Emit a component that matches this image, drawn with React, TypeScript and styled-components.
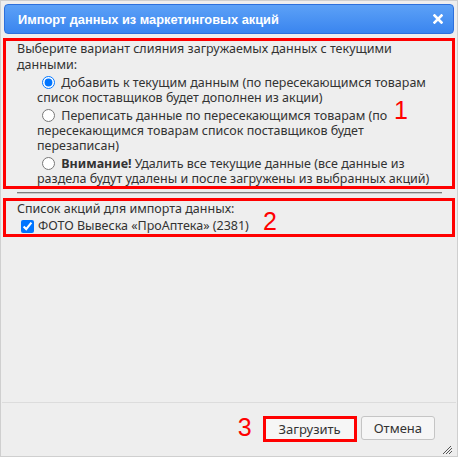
import * as React from 'react'
import styled, { createGlobalStyle } from 'styled-components';

const GlobalStyle = createGlobalStyle`
    html, body { margin: 0; padding: 0; background: #ffffff; }
    body { font-family: "Noto Sans", "Open Sans", sans-serif; }
    * { box-sizing: border-box; }
`

const Dialog = styled.div`
    width: 458px;
    height: 457px;
    display: flex;
    flex-direction: column;
    background: #eeeeee;
    border: 1px solid #cfcfcf;
    padding: 3px 2px 0 2px;
    position: relative;
    color: #333333;
    font-size: 12.5px;
`
const TitleBar = styled.div`
    height: 30px;
    margin: 0 1px;
    display: flex;
    align-items: center;
    justify-content: space-between;
    padding: 0 10px 0 13px;
    border: 1px solid #2d70dc;
    border-radius: 4px;
    background: linear-gradient(to bottom, #5ca1f7, #3a85ef);
    color: #ffffff;
    font-family: "Liberation Sans", sans-serif;
    font-weight: bold;
    font-size: 12.8px;
`
const CloseButton = styled.span`
    display: flex;
    width: 10px;
    height: 10px;
`
const Body = styled.div`
    flex: 1;
    padding-top: 4px;
`
const Marked = styled.div<{ $pad: string }>`
    position: relative;
    border: 3px solid #ff0000;
    padding: ${p => p.$pad};
    line-height: 15px;
`
const Lead = styled.div`
    line-height: 15.5px;
`
const Option = styled.div`
    padding-left: 20px;
    margin-top: 1px;
    input { margin: 3px 3px 0 5px; vertical-align: -2px; }
`
const Note = styled.span<{ $x: number, $y: number }>`
    position: absolute;
    left: ${p => p.$x}px;
    top: ${p => p.$y}px;
    color: #ff0000;
    font-family: "Liberation Sans", sans-serif;
    font-size: 25px;
    line-height: 25px;
`
const Separator = styled.hr`
    margin: 3px 13px 4px 14px;
    border: 0;
    border-top: 1px solid #7d7d7d;
    border-bottom: 1px solid #c8c8c8;
`
const CheckRow = styled.label`
    display: flex;
    align-items: center;
    margin-top: 2px;
    input { margin: 1px 4px 0 4px; width: 13px; height: 13px; }
`
const ButtonPane = styled.div`
    display: flex;
    justify-content: flex-end;
    align-items: center;
    gap: 4px;
    margin: 0 -1px;
    padding: 10px 21px 14px 0;
    border-top: 1px solid #dcdcdc;
`
const Button = styled.button<{ $marked?: boolean }>`
    height: ${p => p.$marked ? 26 : 24}px;
    padding: 0 ${p => p.$marked ? 13 : 12}px;
    margin-top: ${p => p.$marked ? 2 : 0}px;
    background: #f6f6f6;
    border: ${p => p.$marked ? '3px solid #ff0000' : '1px solid #c5c5c5'};
    border-radius: ${p => p.$marked ? 0 : 3}px;
    color: #333333;
    font-family: "Noto Sans", sans-serif;
    font-size: 13px;
`
const Three = styled.span`
    color: #ff0000;
    font-family: "Liberation Sans", sans-serif;
    font-size: 25px;
    margin-right: 7px;
`
const Grip = styled.svg`
    position: absolute;
    right: 4px;
    bottom: 1px;
`

export default function App() {
    return (
        <Dialog>
            <GlobalStyle />
            <TitleBar>
                <span>Импорт данных из маркетинговых акций</span>
                <CloseButton>
                    <svg width="10" height="10" viewBox="0 0 10 10">
                        <path d="M1.5 1.5 L8.5 8.5 M8.5 1.5 L1.5 8.5" stroke="#fff" strokeWidth="2.6" strokeLinecap="square" />
                    </svg>
                </CloseButton>
            </TitleBar>
            <Body>
                <Marked $pad="0 17px 0 11px">
                    <Lead>Выберите вариант слияния загружаемых данных с текущими данными:</Lead>
                    <Option>
                        <input type="radio" name="merge" defaultChecked /> Добавить к текущим данным (по пересекающимся товарам список поставщиков будет дополнен из акции)
                    </Option>
                    <Option>
                        <input type="radio" name="merge" /> Переписать данные по пересекающимся товарам (по пересекающимся товарам список поставщиков будет перезаписан)
                    </Option>
                    <Option>
                        <input type="radio" name="merge" /> <b>Внимание!</b> Удалить все текущие данные (все данные из раздела будут удалены и после загружены из выбранных акций)
                    </Option>
                    <Note $x={388} $y={57}>1</Note>
                </Marked>
                <Separator />
                <Marked $pad="0 8px 1px 11px">
                    Список акций для импорта данных:
                    <CheckRow>
                        <input type="checkbox" defaultChecked />
                        ФОТО Вывеска «ПроАптека» (2381)
                    </CheckRow>
                    <Note $x={257} $y={8}>2</Note>
                </Marked>
            </Body>
            <ButtonPane>
                <Three>3</Three>
                <Button $marked>Загрузить</Button>
                <Button>Отмена</Button>
            </ButtonPane>
            <Grip width="12" height="10" viewBox="0 0 12 10">
                <path d="M2 9 L10 1 M5 9 L11 3 M8 9 L11 6" stroke="#555" strokeWidth="1" />
            </Grip>
        </Dialog>
    );
}
